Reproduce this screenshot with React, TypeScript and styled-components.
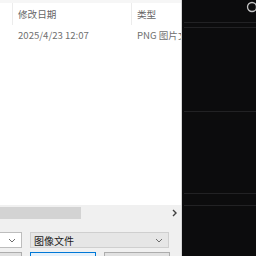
import React from "react"
import styled, { createGlobalStyle } from "styled-components"

const Global = createGlobalStyle`
  html, body { margin: 0; padding: 0; background: #0c0c0d; }
  body { font-family: "Noto Sans CJK SC", "Noto Sans", sans-serif; }
`

const Screen = styled.div`
  display: flex;
  width: 256px;
  height: 256px;
  overflow: hidden;
`

const Dialog = styled.div`
  width: 181px;
  flex-shrink: 0;
  display: flex;
  flex-direction: column;
  background: #ffffff;
  border-right: 1px solid #d6d6d6;
`

const List = styled.div`
  flex: 1;
  border-top: 3px solid #f6f6f6;
  overflow: hidden;
`

const Row = styled.div<{ $h: number }>`
  display: grid;
  grid-template-columns: 12px 119px 70px;
  height: ${p => p.$h}px;
  width: 201px;
`

const Cell = styled.div<{ $head?: boolean }>`
  display: flex;
  align-items: center;
  padding-left: 5px;
  font-size: 9.6px;
  white-space: nowrap;
  overflow: hidden;
  color: ${p => (p.$head ? "#666666" : "#707070")};
  border-left: 1px solid ${p => (p.$head ? "#ececec" : "transparent")};
  &:first-child { border-left: none; padding-left: 0; }
`

const HScroll = styled.div`
  height: 16px;
  display: flex;
  align-items: center;
  background: #f0f0f0;
`

const Thumb = styled.div`
  width: 81px;
  height: 12px;
  background: #d3d3d3;
`

const Arrow = styled.span`
  margin-left: auto;
  margin-right: 4px;
  display: flex;
`

const Footer = styled.div`
  height: 35px;
  flex-shrink: 0;
  background: #f0f0f0;
  display: flex;
  flex-direction: column;
  gap: 4px;
  padding-top: 11px;
  box-sizing: border-box;
`

const Line = styled.div`
  display: flex;
  gap: 8px;
  margin-left: -1px;
`

const Combo = styled.div<{ $w: number; $filled?: boolean }>`
  width: ${p => p.$w}px;
  height: 16px;
  box-sizing: border-box;
  display: flex;
  align-items: center;
  padding: 0 5px 0 3px;
  font-size: 10px;
  color: #1b1b1b;
  background: ${p => (p.$filled ? "#e6e6e6" : "#ffffff")};
  border: 1px solid ${p => (p.$filled ? "#cfcfcf" : "#bdbdbd")};
`

const Chevron = styled.svg`
  margin-left: auto;
`

const Button = styled.div<{ $w: number; $primary?: boolean }>`
  width: ${p => p.$w}px;
  height: 20px;
  box-sizing: border-box;
  background: ${p => (p.$primary ? "#e5f1fb" : "#e1e1e1")};
  border: 1px solid ${p => (p.$primary ? "#0078d7" : "#adadad")};
`

const Dark = styled.div`
  flex: 1;
  display: flex;
  flex-direction: column;
  background: #0c0c0d;
  overflow: hidden;
`

const TopBar = styled.div`
  height: 22px;
  display: flex;
  justify-content: flex-end;
  align-items: flex-start;
  padding-top: 1px;
  box-sizing: border-box;
`

const Rule = styled.div<{ $gap: number }>`
  height: 1px;
  margin-top: ${p => p.$gap}px;
  margin-left: 2px;
  background: #222224;
  flex-shrink: 0;
`

const down = (
  <Chevron width="8" height="5" viewBox="0 0 8 5">
    <path d="M1 1l3 3 3-3" fill="none" stroke="#6d6d6d" strokeWidth="1" />
  </Chevron>
)

export default function App() {
  return (
    <Screen>
      <Global />
      <Dialog>
        <List>
          <Row $h={22}>
            <Cell $head />
            <Cell $head>修改日期</Cell>
            <Cell $head>类型</Cell>
          </Row>
          <Row $h={20}>
            <Cell />
            <Cell>2025/4/23 12:07</Cell>
            <Cell>PNG 图片文件</Cell>
          </Row>
        </List>
        <HScroll>
          <Thumb />
          <Arrow>
            <svg width="5" height="8" viewBox="0 0 5 8">
              <path d="M1 1l3 3-3 3" fill="none" stroke="#404040" strokeWidth="1.4" />
            </svg>
          </Arrow>
        </HScroll>
        <Footer>
          <Line>
            <Combo $w={23}>{down}</Combo>
            <Combo $w={139} $filled>
              图像文件
              {down}
            </Combo>
          </Line>
          <Line>
            <Button $w={23} />
            <Button $w={66} $primary />
            <Button $w={66} />
          </Line>
        </Footer>
      </Dialog>
      <Dark>
        <TopBar>
          <svg width="12" height="12" viewBox="0 0 12 12" style={{ marginRight: -2 }}>
            <circle cx="6" cy="6" r="4.5" fill="none" stroke="#c4c4c4" strokeWidth="1.3" />
          </svg>
        </TopBar>
        <Rule $gap={0} />
        <Rule $gap={4} />
        <Rule $gap={83} />
        <Rule $gap={81} />
        <Rule $gap={11} />
      </Dark>
    </Screen>
  )
}
